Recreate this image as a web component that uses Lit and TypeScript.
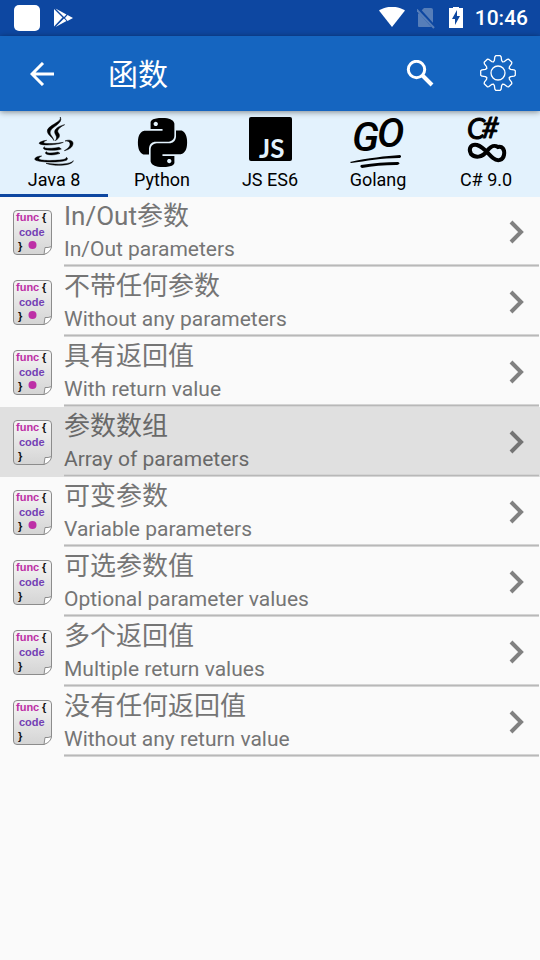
import { LitElement, html, css, svg, nothing } from "lit";
import { customElement, state } from "lit/decorators.js";
import { classMap } from "lit/directives/class-map.js";

interface Topic {
  zh: string;
  en: string;
  dot: boolean;
}

const TOPICS: Topic[] = [
  { zh: "In/Out参数", en: "In/Out parameters", dot: true },
  { zh: "不带任何参数", en: "Without any parameters", dot: true },
  { zh: "具有返回值", en: "With return value", dot: true },
  { zh: "参数数组", en: "Array of parameters", dot: false },
  { zh: "可变参数", en: "Variable parameters", dot: true },
  { zh: "可选参数值", en: "Optional parameter values", dot: false },
  { zh: "多个返回值", en: "Multiple return values", dot: false },
  { zh: "没有任何返回值", en: "Without any return value", dot: false },
];

const javaLogo = html`<svg class="logo" width="40" height="52" viewBox="102 24 120 156" aria-hidden="true">
  <g stroke="#000" stroke-width="1.500">
    <path d="M181 27 C187 43 140 52 142 70 C143 82 158 88 162 98 C158 84 148 80 151 70 C155 56 190 47 181 27 Z" />
    <path d="M194 50 C174 55 163 63 164 73 C165 82 175 86 166 98 C182 89 180 80 174 73 C171 66 178 58 194 50 Z" />
    <path d="M140 97 C126 99 116 103 118 107 C124 113 170 112 190 103 C170 107 140 108 132 105 C129 103 134 99 140 97 Z" />
    <path d="M195 99 C207 93 221 98 219 108 C217 119 206 125 193 128 C205 121 211 114 210 107 C209 100 203 98 195 99 Z" />
    <path d="M134 116 C127 120 130 125 142 126 C160 128 176 126 184 123 L177 118 C164 121 144 122 136 120 C133 119 133 117 134 116 Z" />
    <path d="M140 131 C133 134 136 138 146 140 C159 142 173 139 180 136 L174 132 C163 135 149 136 142 134 Z" />
    <path d="M125 144 C112 144 100 151 106 156 C116 163 178 165 199 157 C204 154 203 150 199 148 C201 154 185 156 165 157 C143 158 121 157 117 153 C115 150 119 147 125 144 Z" />
    <path d="M138 166 C170 170 211 170 220 158 C218 172 168 177 138 166 Z" />
  </g>
</svg>`;

const pythonLogo = html`<svg class="logo" width="49" height="49" viewBox="0 0 24 24" aria-hidden="true">
  <path d="M14.25.18l.9.2.73.26.59.3.45.32.34.34.25.34.16.33.1.3.04.26.02.2-.01.13V8.5l-.05.63-.13.55-.21.46-.26.38-.3.31-.33.25-.35.19-.35.14-.33.1-.3.07-.26.04-.21.02H8.77l-.69.05-.59.14-.5.22-.41.27-.33.32-.27.35-.2.36-.15.37-.1.35-.07.32-.04.27-.02.21v3.06H3.17l-.21-.03-.28-.07-.32-.12-.35-.18-.36-.26-.36-.36-.35-.46-.32-.59-.28-.73-.21-.88-.14-1.05-.05-1.23.06-1.22.16-1.04.24-.87.32-.71.36-.57.4-.44.42-.33.42-.24.4-.16.36-.1.32-.05.24-.01h.16l.06.01h8.16v-.83H6.18l-.01-2.75-.02-.37.05-.34.11-.31.17-.28.25-.26.31-.23.38-.2.44-.18.51-.15.58-.12.64-.1.71-.06.77-.04.84-.02 1.27.05zm-6.3 1.98l-.23.33-.08.41.08.41.23.34.33.22.41.09.41-.09.33-.22.23-.34.08-.41-.08-.41-.23-.33-.33-.22-.41-.09-.41.09zm13.09 3.95l.28.06.32.12.35.18.36.27.36.35.35.47.32.59.28.73.21.88.14 1.04.05 1.23-.06 1.23-.16 1.04-.24.86-.32.71-.36.57-.4.45-.42.33-.42.24-.4.16-.36.09-.32.05-.24.02-.16-.01h-8.22v.82h5.84l.01 2.76.02.36-.05.34-.11.31-.17.29-.25.25-.31.24-.38.2-.44.17-.51.15-.58.13-.64.09-.71.07-.77.04-.84.01-1.27-.04-1.07-.14-.9-.2-.73-.25-.59-.3-.45-.33-.34-.34-.25-.34-.16-.33-.1-.3-.04-.25-.02-.2.01-.13v-5.34l.05-.64.13-.54.21-.46.26-.38.3-.32.33-.24.35-.2.35-.14.33-.1.3-.06.26-.04.21-.02.13-.01h5.84l.69-.05.59-.14.5-.21.41-.28.33-.32.27-.35.2-.36.15-.36.1-.35.07-.32.04-.28.02-.21V6.07h2.09l.14.01zm-6.47 14.25l-.23.33-.08.41.08.41.23.33.33.23.41.08.41-.08.33-.23.23-.33.08-.41-.08-.41-.23-.33-.33-.23-.41-.08-.41.08z" />
</svg>`;

const jsLogo = html`<svg class="logo" width="44" height="52" viewBox="0 0 44 52" aria-hidden="true">
  <rect x="1" y="1" width="43" height="44" rx="2" />
  <text class="js-mark" x="11" y="42">JS</text>
</svg>`;

const goLogo = html`<svg class="logo" width="60" height="52" viewBox="0 0 60 52" aria-hidden="true">
  <text class="go-mark" x="4 29" y="35 31">GO</text>
  <path d="M2 46 C20 42 38 40 52 39 C54 40 53 42 51 42 C34 42 18 45 3 47 Z" />
  <path d="M13 49 C26 47 38 46 50 46 C53 47 51 49 48 49 C36 49 24 50 14 52 C12 51 12 50 13 49 Z" />
</svg>`;

const csharpLogo = html`<svg class="logo" width="40" height="52" viewBox="0 0 40 52" aria-hidden="true">
  <text class="cs-mark" x="1 16" y="23 22">C#</text>
  <path
    class="loop"
    d="M21 35C16 42 9 42 5 38C2 32 5 28 11 29C18 31 22 38 27 42C32 46 37 44 38 39C39 33 36 30 32 31C27 28 24 31 21 35Z"
  />
</svg>`;

const LANGUAGES = [
  { name: "Java 8", logo: javaLogo },
  { name: "Python", logo: pythonLogo },
  { name: "JS ES6", logo: jsLogo },
  { name: "Golang", logo: goLogo },
  { name: "C# 9.0", logo: csharpLogo },
];

/** Outline of an eight-toothed cog centred on the origin. */
function cogPath(): string {
  const profile = [
    [-4.6, -11.2],
    [-3.6, -12.6],
    [-3.2, -16],
    [-2.2, -17.3],
    [2.2, -17.3],
    [3.2, -16],
    [3.6, -12.6],
    [4.6, -11.2],
  ];
  const points: string[] = [];
  for (let tooth = 0; tooth < 8; tooth++) {
    const a = (tooth * Math.PI) / 4;
    for (const [x, y] of profile) {
      const px = x * Math.cos(a) - y * Math.sin(a);
      const py = x * Math.sin(a) + y * Math.cos(a);
      points.push(`${px.toFixed(2)} ${py.toFixed(2)}`);
    }
  }
  return `M${points.join("L")}Z`;
}

@customElement("func-icon")
export class FuncIcon extends LitElement {
  static properties = { dot: { type: Boolean } };
  declare dot: boolean;

  static styles = css`
    :host {
      display: block;
      width: 39px;
      height: 45px;
    }
    svg {
      display: block;
    }
    text {
      font: bold 11px "Liberation Sans", Arial, sans-serif;
    }
    .func {
      fill: #bd2fa6;
    }
    .code {
      fill: #7340b4;
    }
    .brace {
      fill: #111;
    }
  `;

  render() {
    return html`<svg width="39" height="45" viewBox="0 0 39 45" aria-hidden="true">
      <defs>
        <linearGradient id="paper" x1="0" y1="0" x2="0" y2="1">
          <stop offset="0" stop-color="#f6f6f6" />
          <stop offset="1" stop-color="#d4d4d4" />
        </linearGradient>
      </defs>
      <path
        d="M4 .5H35Q38.500 .5 38.500 4V37L31 44.500H4Q.5 44.500 .5 41V4Q.5 .5 4 .5Z"
        fill="url(#paper)"
        stroke="#8c8c8c"
      />
      <path d="M31 44.500L32 37.500Q35 38 38.500 36.500Q38 42 31 44.500Z" fill="#fff" stroke="#8c8c8c" />
      <text class="func" x="3" y="11">func</text>
      <text class="brace" x="29" y="11">{</text>
      <text class="code" x="6" y="26">code</text>
      <text class="brace" x="5" y="40">}</text>
      ${this.dot ? svg`<circle cx="19.500" cy="35" r="4" fill="#bd2fa6" />` : nothing}
    </svg>`;
  }
}

@customElement("app-root")
export class AppRoot extends LitElement {
  @state() private language = 0;
  @state() private selected = 3;

  static styles = css`
    :host {
      display: block;
      min-height: 100vh;
      background: #fafafa;
      font-family: Roboto, "Noto Sans CJK SC", sans-serif;
    }
    * {
      box-sizing: border-box;
    }
    svg {
      display: block;
      flex: none;
    }
    button {
      margin: 0;
      padding: 0;
      border: 0;
      background: none;
      color: inherit;
      font: inherit;
      cursor: pointer;
    }
    .status {
      display: flex;
      align-items: center;
      justify-content: space-between;
      height: 36px;
      padding: 0 12px 0 14px;
      background: #0d47a1;
      color: #fff;
    }
    .notices,
    .system {
      display: flex;
      align-items: center;
    }
    .notices {
      gap: 14px;
    }
    .system {
      gap: 12px;
    }
    .app-icon {
      width: 26px;
      height: 26px;
      border-radius: 5px;
      background: #fff;
    }
    .clock {
      font-size: 21px;
      font-weight: 500;
      line-height: 36px;
    }
    .bar {
      position: relative;
      display: flex;
      align-items: center;
      height: 75px;
      background: #1565c0;
      color: #fff;
      box-shadow: 0 1px 6px rgba(0, 0, 0, 0.45);
    }
    .icon-button {
      display: grid;
      place-items: center;
      width: 84px;
      height: 75px;
    }
    .title {
      flex: 1;
      margin: 0;
      padding: 2px 0 0 24px;
      font-size: 30px;
      font-weight: 400;
      line-height: 44px;
    }
    .action {
      width: 72px;
    }
    .tabs {
      display: grid;
      grid-template-columns: repeat(5, 1fr);
      background: #e3f2fd;
    }
    .tab {
      display: flex;
      flex-direction: column;
      align-items: center;
      height: 86px;
      padding-top: 5px;
      border-bottom: 3px solid transparent;
      color: #000;
      font-size: 18px;
      line-height: 24px;
    }
    .tab.active {
      border-bottom-color: #0d47a1;
    }
    .logo-box {
      display: grid;
      place-items: center;
      height: 52px;
    }
    .logo {
      overflow: visible;
      fill: #000;
    }
    .js-mark {
      fill: #e3f2fd;
      font: 700 26px Lato, sans-serif;
    }
    .go-mark {
      font: italic 500 41px Roboto, sans-serif;
    }
    .cs-mark {
      font: italic 400 29px Lato, sans-serif;
      stroke: #000;
      stroke-width: 1px;
    }
    .loop {
      fill: none;
      stroke: #000;
      stroke-width: 4px;
    }
    .list {
      margin: 0;
      padding: 0;
      list-style: none;
    }
    .row {
      display: flex;
      width: 100%;
      padding: 0 1px 0 13px;
      color: #757575;
      text-align: left;
    }
    .row.selected {
      background: #e0e0e0;
      color: #696969;
    }
    .row-icon {
      flex: none;
      margin: 13px 12px 0 0;
    }
    .row-body {
      flex: 1;
      display: flex;
      align-items: center;
      justify-content: space-between;
      padding: 0 14px 3px 0;
      background: linear-gradient(#d4d4d4 1px, #b8b8b8 1px 2px, #d4d4d4 2px) left bottom / 100% 3px
        no-repeat;
    }
    .names {
      display: flex;
      flex-direction: column;
    }
    .zh {
      font-size: 26px;
      line-height: 38px;
    }
    .en {
      font-size: 21px;
      line-height: 29px;
    }
    .chevron {
      fill: none;
      stroke: currentColor;
      stroke-width: 4px;
      opacity: 0.9;
    }
  `;

  render() {
    return html`
      <div class="status">
        <div class="notices">
          <div class="app-icon"></div>
          <svg width="19" height="20" viewBox="0 0 19 20" fill="#fff" aria-hidden="true">
            <path d="M0 1L8.500 9.500L0 18.500Z" />
            <path d="M1.500 .5L12.500 6.500L10 9ZM1.500 19L12.500 13L10 10.500Z" />
            <path d="M13.500 7L19 10L13.500 13L11 10Z" />
          </svg>
        </div>
        <div class="system">
          <svg width="26" height="22" viewBox="0 1 26 22" fill="#fff" aria-hidden="true">
            <path d="M0 4.500C8 -.5 18 -.5 26 4.500L13 21Z" />
          </svg>
          <svg width="20" height="22" viewBox="1 0 20 22" aria-hidden="true">
            <path d="M8 1H15Q17 1 17 3V19Q17 20 16 20H3Q2 20 2 19V7Z" fill="#567eb9" />
            <path d="M1 1L19 21" stroke="#0d47a1" stroke-width="4" />
            <path d="M0 2L18 21" stroke="#567eb9" stroke-width="2" />
          </svg>
          <svg width="14" height="22" viewBox="4 1 14 22" aria-hidden="true">
            <path d="M8 0H14V2H18V22H4V2H8Z" fill="#fff" />
            <path d="M12 4L7 13H10V19L15 10H12Z" fill="#0d47a1" />
          </svg>
          <span class="clock">10:46</span>
        </div>
      </div>

      <header class="bar">
        <button class="icon-button" aria-label="返回">
          <svg width="24" height="24" viewBox="0 0 24 24" fill="none" stroke="#fff" stroke-width="3" aria-hidden="true">
            <path d="M24 12H2M13 1L2 12L13 23" />
          </svg>
        </button>
        <h1 class="title">函数</h1>
        <button class="icon-button action" aria-label="搜索">
          <svg width="28" height="28" viewBox="0 1 28 28" fill="none" stroke="#fff" aria-hidden="true">
            <circle cx="10.500" cy="10.500" r="8.200" stroke-width="3" />
            <path d="M16.500 16.500L26 26" stroke-width="4" />
          </svg>
        </button>
        <button class="icon-button" aria-label="设置">
          <svg width="38" height="38" viewBox="-19 -18 38 38" fill="none" stroke="#fff" stroke-width="1.300" aria-hidden="true">
            <path d=${cogPath()} stroke-linejoin="round" />
            <circle r="7" />
          </svg>
        </button>
      </header>

      <nav class="tabs" role="tablist">
        ${LANGUAGES.map(
          (lang, i) => html`<button
            role="tab"
            aria-selected=${i === this.language ? "true" : "false"}
            class=${classMap({ tab: true, active: i === this.language })}
            @click=${() => (this.language = i)}
          >
            <span class="logo-box">${lang.logo}</span>
            <span>${lang.name}</span>
          </button>`
        )}
      </nav>

      <ul class="list">
        ${TOPICS.map(
          (topic, i) => html`<li>
            <button
              class=${classMap({ row: true, selected: i === this.selected })}
              @click=${() => (this.selected = i)}
            >
              <func-icon class="row-icon" .dot=${topic.dot}></func-icon>
              <span class="row-body">
                <span class="names">
                  <span class="zh">${topic.zh}</span>
                  <span class="en">${topic.en}</span>
                </span>
                <svg class="chevron" width="16" height="26" viewBox="0 0 16 26" aria-hidden="true">
                  <path d="M2 4L12 14L2 24" />
                </svg>
              </span>
            </button>
          </li>`
        )}
      </ul>
    `;
  }
}
